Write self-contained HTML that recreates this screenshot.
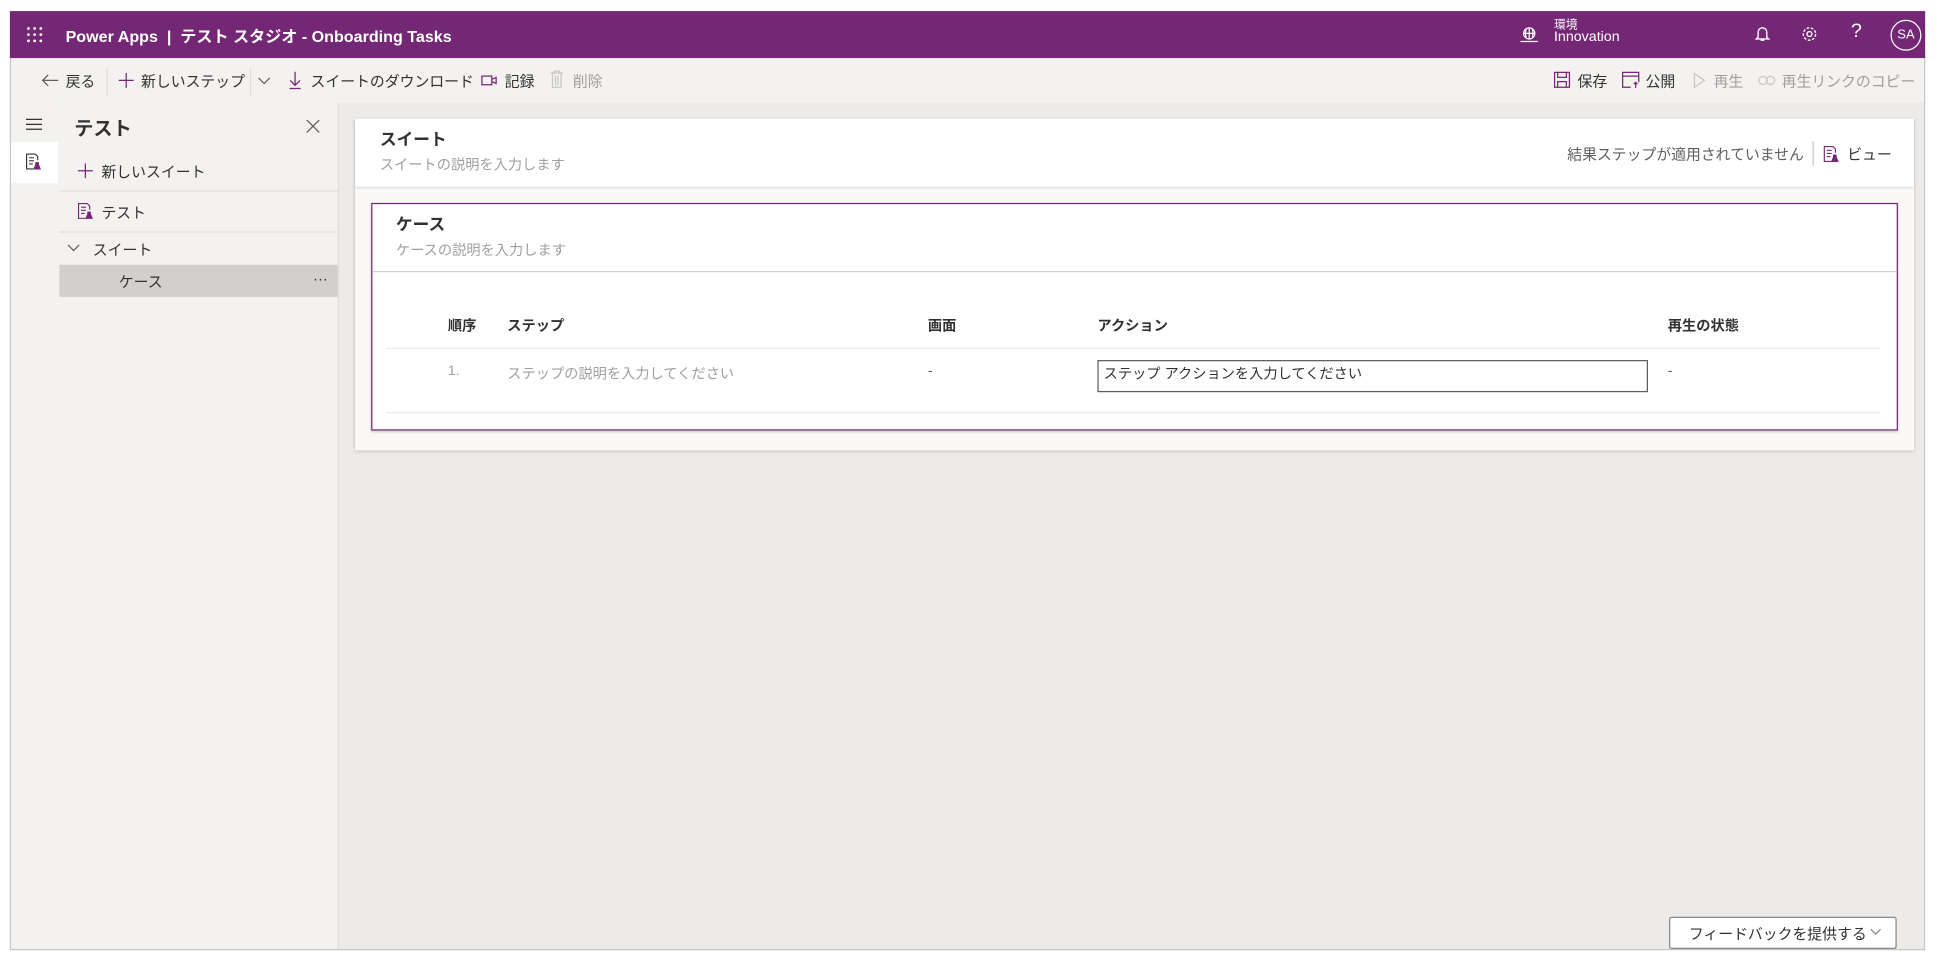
<!DOCTYPE html>
<html><head><meta charset="utf-8"><style>
*{box-sizing:border-box;margin:0;padding:0}
html,body{width:1940px;height:960px;overflow:hidden;background:#fff}
#s{position:absolute;left:0;top:0;width:1568px;height:776px;transform:scale(1.23724);transform-origin:0 0;font-family:"Liberation Sans","Noto Sans CJK JP",sans-serif;color:#323130;font-size:11.5px}
.a{position:absolute;white-space:nowrap}
svg{position:absolute;overflow:visible}
.t{font-size:12px}
</style></head><body><div id="s">
<div class="a" style="left:8px;top:9px;width:1548px;height:759px;border:1px solid #c8c6c4;background:#edebe9"></div>
<div class="a" style="left:8px;top:9px;width:1548px;height:38px;background:#742774"></div>
<svg style="left:22px;top:22px" width="12" height="12" fill="#fff"><circle cx="1" cy="1" r="1.1"/><circle cx="6" cy="1" r="1.1"/><circle cx="11" cy="1" r="1.1"/><circle cx="1" cy="6" r="1.1"/><circle cx="6" cy="6" r="1.1"/><circle cx="11" cy="6" r="1.1"/><circle cx="1" cy="11" r="1.1"/><circle cx="6" cy="11" r="1.1"/><circle cx="11" cy="11" r="1.1"/></svg>
<div class="a" style="left:53px;top:19px;color:#fff;font-size:13px;font-weight:bold">Power Apps &nbsp;|&nbsp; テスト スタジオ - Onboarding Tasks</div>
<svg style="left:1229px;top:22px" width="14" height="12" fill="none" stroke="#fff" stroke-width="1"><circle cx="7" cy="5" r="4.5"/><path d="M2.5 5h9M7 .5v9M4.5 1.5q-1 3.5 0 7M9.5 1.5q1 3.5 0 7M0 11.5h14"/></svg>
<div class="a" style="left:1256px;top:12px;color:#fff;font-size:9.5px">環境</div>
<div class="a" style="left:1256px;top:24px;color:#fff;font-size:11.5px">Innovation</div>
<svg style="left:1419px;top:21px" width="11" height="13" fill="none" stroke="#fff" stroke-width="1.1"><path d="M2 9V5a3.5 3.5 0 0 1 7 0v4l1.5 1.5h-10z M4 11.5h3"/></svg>
<svg style="left:1456px;top:21px" width="13" height="13" fill="none" stroke="#fff" stroke-width="1.1"><circle cx="6.5" cy="6.5" r="2"/><circle cx="6.5" cy="6.5" r="5" stroke-dasharray="2.2 1.3"/></svg>
<div class="a" style="left:1496px;top:17px;color:#fff;font-size:16px">?</div>
<div class="a" style="left:1528px;top:16px;width:25px;height:25px;border:1px solid #fff;border-radius:50%;color:#fff;font-size:10.5px;text-align:center;line-height:23px">SA</div>
<div class="a" style="left:9px;top:47px;width:1546px;height:36px;background:#f3f2f1"></div>
<svg style="left:34px;top:60px" width="13" height="10" fill="none" stroke="#605e5c"><path d="M13 5H1M5 .5L.5 5 5 9.5"/></svg>
<div class="a t" style="left:53px;top:57px">戻る</div>
<div class="a" style="left:86px;top:54px;width:1px;height:24px;background:#e1dfdd"></div>
<svg style="left:96px;top:59px" width="12" height="12" stroke="#742774"><path d="M6 0v12M0 6h12"/></svg>
<div class="a t" style="left:114px;top:57px">新しいステップ</div>
<div class="a" style="left:202px;top:54px;width:1px;height:24px;background:#e1dfdd"></div>
<svg style="left:209px;top:63px" width="9" height="5" fill="none" stroke="#605e5c"><path d="M0 0l4.5 4.5L9 0"/></svg>
<svg style="left:234px;top:58px" width="9" height="14" fill="none" stroke="#742774"><path d="M4.5 0v11M.5 7l4 4 4-4M0 13.5h9"/></svg>
<div class="a t" style="left:251px;top:57px">スイートのダウンロード</div>
<svg style="left:389px;top:61px" width="13" height="8" fill="none" stroke="#742774"><rect x=".5" y=".5" width="8" height="7"/><path d="M9 3l3-1.5v5L9 5"/></svg>
<div class="a t" style="left:408px;top:57px">記録</div>
<svg style="left:445px;top:57px" width="10" height="14" fill="none" stroke="#c8c6c4"><path d="M0 2h10M3 2V.5h4V2M1.5 2v11.5h7V2M4 4v8M6 4v8"/></svg>
<div class="a t" style="left:463px;top:57px;color:#a19f9d">削除</div>
<svg style="left:1256px;top:58px" width="13" height="13" fill="none" stroke="#742774"><path d="M.5.5h12v12H.5zM3 .5v4h7v-4M3 12.5V8h7v4.5"/></svg>
<div class="a t" style="left:1275px;top:57px">保存</div>
<svg style="left:1311px;top:58px" width="14" height="13" fill="none" stroke="#742774"><path d="M7 12.5H.5V.5h13v8M.5 3.5h13M11 13V8.5M9.5 10l1.5-1.5 1.5 1.5"/></svg>
<div class="a t" style="left:1330px;top:57px">公開</div>
<svg style="left:1369px;top:59px" width="9" height="12" fill="none" stroke="#c8c6c4"><path d="M.5.5l8 5.5-8 5.5z"/></svg>
<div class="a t" style="left:1385px;top:57px;color:#a19f9d">再生</div>
<svg style="left:1421px;top:61px" width="14" height="8" fill="none" stroke="#c8c6c4"><circle cx="4" cy="4" r="3.3"/><circle cx="10" cy="4" r="3.3"/></svg>
<div class="a t" style="left:1440px;top:57px;color:#a19f9d">再生リンクのコピー</div>
<div class="a" style="left:9px;top:83px;width:39px;height:684px;background:#f3f2f1"></div>
<svg style="left:21px;top:96px" width="13" height="9" stroke="#323130"><path d="M0 .5h13M0 4.5h13M0 8.5h13"/></svg>
<div class="a" style="left:9px;top:115px;width:38px;height:33px;background:#fff"></div>
<svg style="left:21px;top:124px" width="12" height="13" fill="none" stroke="#323130" stroke-width=".9"><path d="M6 12.5H.5V.5h7l2 2v3M2.5 3.5h4M2.5 6h4M2.5 8.5h3"/><path d="M8 7v2l-1.5 3.5h5L10 9V7" fill="#742774" stroke="#742774"/></svg>
<div class="a" style="left:48px;top:83px;width:226px;height:684px;background:#f3f2f1;border-right:1px solid #e1dfdd"></div>
<div class="a" style="left:60px;top:92px;font-size:15.5px;font-weight:bold">テスト</div>
<svg style="left:248px;top:97px" width="10" height="10" stroke="#605e5c"><path d="M0 0l10 10M10 0L0 10"/></svg>
<svg style="left:63px;top:132px" width="12" height="12" stroke="#742774"><path d="M6 0v12M0 6h12"/></svg>
<div class="a t" style="left:82px;top:130px">新しいスイート</div>
<div class="a" style="left:48px;top:154px;width:225px;height:1px;background:#e1dfdd"></div>
<svg style="left:63px;top:164px" width="12" height="13" fill="none" stroke="#742774" stroke-width=".9"><path d="M6 12.5H.5V.5h7l2 2v3M2.5 3.5h4M2.5 6h4M2.5 8.5h3"/><path d="M8 7v2l-1.5 3.5h5L10 9V7" fill="#742774"/></svg>
<div class="a t" style="left:82px;top:163px">テスト</div>
<div class="a" style="left:48px;top:187px;width:225px;height:1px;background:#e1dfdd"></div>
<svg style="left:55px;top:198px" width="9" height="5" fill="none" stroke="#605e5c"><path d="M0 0l4.5 4.5L9 0"/></svg>
<div class="a t" style="left:75px;top:193px">スイート</div>
<div class="a" style="left:48px;top:214px;width:225px;height:26px;background:#d2d0ce"></div>
<div class="a t" style="left:96px;top:219px">ケース</div>
<div class="a" style="left:253px;top:218px;font-size:12px">···</div>
<div class="a" style="left:287px;top:96px;width:1260px;height:268px;background:#faf9f8;box-shadow:0 1px 3px rgba(0,0,0,.2)"></div>
<div class="a" style="left:287px;top:96px;width:1260px;height:55px;background:#fff;box-shadow:0 1px 2px rgba(0,0,0,.15)"></div>
<div class="a" style="left:307px;top:101px;font-size:13.5px;font-weight:bold">スイート</div>
<div class="a" style="left:307px;top:125px;color:#a19f9d">スイートの説明を入力します</div>
<div class="a t" style="right:110px;top:116px;color:#605e5c">結果ステップが適用されていません</div>
<div class="a" style="left:1465px;top:114px;width:1px;height:20px;background:#c8c6c4"></div>
<svg style="left:1474px;top:118px" width="12" height="13" fill="none" stroke="#742774" stroke-width=".9"><path d="M6 12.5H.5V.5h7l2 2v3M2.5 3.5h4M2.5 6h4M2.5 8.5h3"/><path d="M8 7v2l-1.5 3.5h5L10 9V7" fill="#742774"/></svg>
<div class="a t" style="left:1493px;top:116px">ビュー</div>
<div class="a" style="left:300px;top:164px;width:1234px;height:184px;background:#fff;border:1px solid #742774;box-shadow:0 1px 2px rgba(0,0,0,.2)"></div>
<div class="a" style="left:320px;top:170px;font-size:13.5px;font-weight:bold">ケース</div>
<div class="a" style="left:320px;top:194px;color:#a19f9d">ケースの説明を入力します</div>
<div class="a" style="left:301px;top:219px;width:1232px;height:1px;background:#d2d0ce"></div>
<div class="a" style="left:362px;top:255px;font-weight:bold">順序</div>
<div class="a" style="left:410px;top:255px;font-weight:bold">ステップ</div>
<div class="a" style="left:750px;top:255px;font-weight:bold">画面</div>
<div class="a" style="left:887px;top:255px;font-weight:bold">アクション</div>
<div class="a" style="left:1348px;top:255px;font-weight:bold">再生の状態</div>
<div class="a" style="left:312px;top:281px;width:1208px;height:1px;background:#edebe9"></div>
<div class="a" style="left:362px;top:294px;color:#a19f9d">1.</div>
<div class="a" style="left:410px;top:294px;color:#a19f9d">ステップの説明を入力してください</div>
<div class="a" style="left:750px;top:294px;color:#605e5c">-</div>
<div class="a" style="left:887px;top:291px;width:445px;height:26px;border:1px solid #605e5c;padding:2px 4px;color:#323130">ステップ アクションを入力してください</div>
<div class="a" style="left:1348px;top:294px;color:#605e5c">-</div>
<div class="a" style="left:312px;top:333px;width:1208px;height:1px;background:#edebe9"></div>
<div class="a t" style="left:1349px;top:741px;width:184px;height:26px;background:#fff;border:1px solid #8a8886;border-radius:2px;padding:4px 0 0 15px">フィードバックを提供する</div>
<svg style="left:1512px;top:751px" width="8" height="4" fill="none" stroke="#8a8886"><path d="M0 0l4 4L8 0"/></svg>
</div></body></html>
